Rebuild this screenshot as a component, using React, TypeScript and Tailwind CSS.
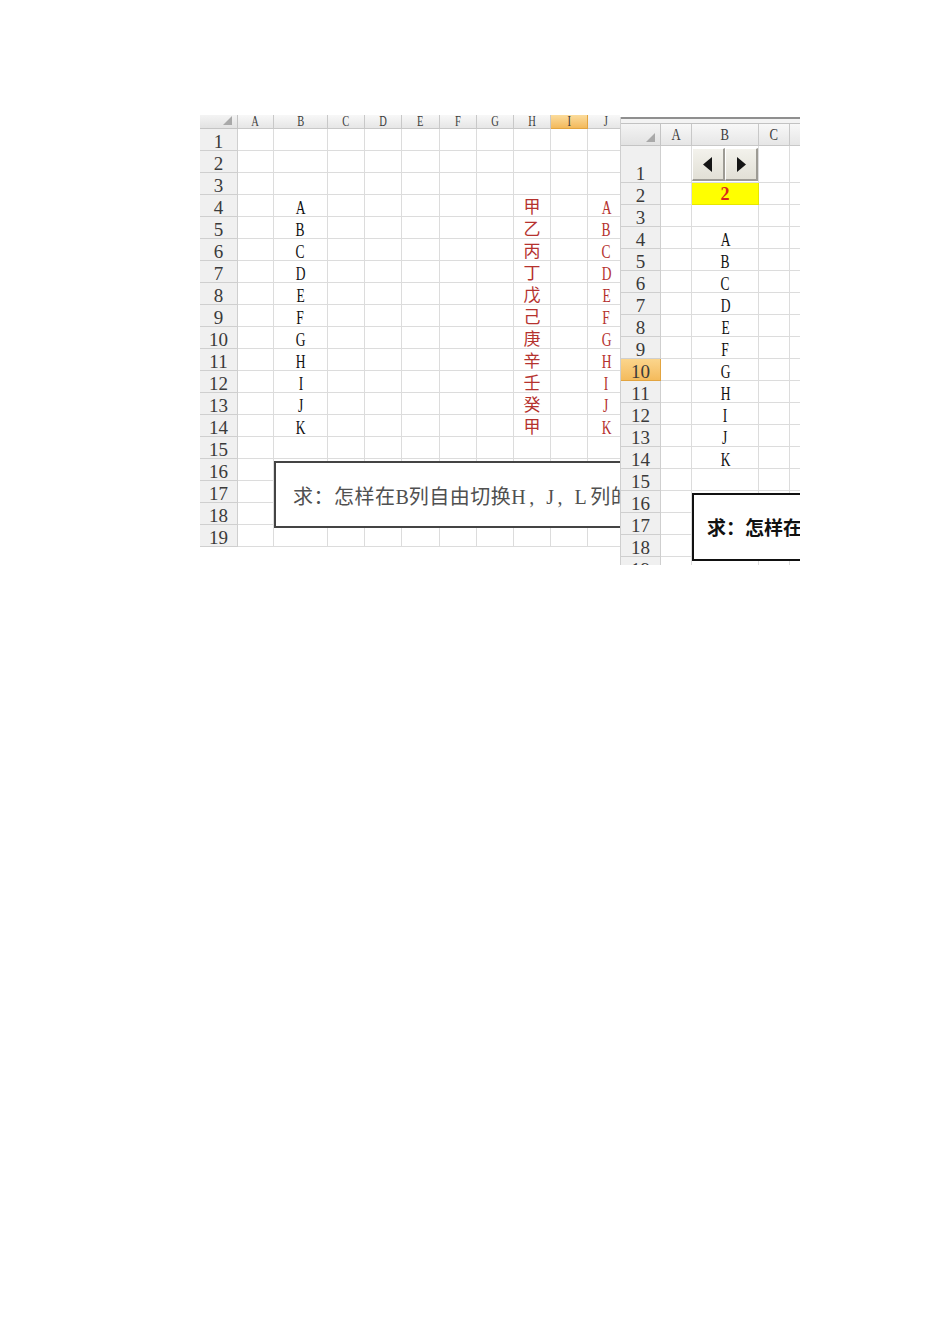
import { Fragment, type ReactNode } from "react";

const LETTERS = "ABCDEFGHIJK".split("");
const STEMS = "甲乙丙丁戊己庚辛壬癸甲".split("");
const LEFT_COLS = ["A", "B", "C", "D", "E", "F", "G", "H", "I", "J"];
const RIGHT_COLS = ["A", "B", "C", "D"];

const serif = "font-['Liberation_Serif','Times_New_Roman',serif]";
const cjk = "font-['Noto_Sans_CJK_SC','Noto_Sans',sans-serif]";

// narrow serif glyphs, close to SimSun's half-width latin
const Narrow = ({ children, className = "" }: { children: ReactNode; className?: string }) => (
  <span className={`inline-block scale-x-[0.75] ${serif} ${className}`}>{children}</span>
);

const Corner = () => (
  <div className="relative border-r border-b border-[#c4c4c4] bg-linear-to-b from-[#f4f4f4] to-[#e2e2e2]">
    <svg className="absolute right-[5px] bottom-[3px]" width="9" height="9" viewBox="0 0 9 9">
      <polygon points="9,0 9,9 0,9" fill="#a9a9a9" />
    </svg>
  </div>
);

const ColHead = ({ label, active, size }: { label: string; active?: boolean; size: string }) => (
  <div
    className={`flex items-center justify-center overflow-hidden border-r border-b leading-none text-[#3c3c3c] ${size} ${
      active
        ? "border-[#e2a440] bg-linear-to-b from-[#fbdc9c] to-[#f3b95a]"
        : "border-[#c8c8c8] bg-linear-to-b from-[#f8f8f8] to-[#e6e6e6]"
    }`}
  >
    <Narrow>{label}</Narrow>
  </div>
);

const RowHead = ({ n, active }: { n: number; active?: boolean }) => (
  <div
    className={`flex items-end justify-center border-r border-b text-[19px] leading-[16px] text-[#3a3a3a] ${serif} ${
      active
        ? "border-[#e2a440] bg-linear-to-b from-[#fbd58c] to-[#f4bb5c]"
        : "border-[#cfcfcf] bg-[#f0f0f0]"
    }`}
  >
    <span>{n}</span>
  </div>
);

const Cell = ({ children }: { children?: ReactNode }) => (
  <div className="flex items-end justify-center overflow-hidden border-r border-b border-[#dcdcdc] leading-[16px]">
    {children}
  </div>
);

function leftContent(col: string, row: number) {
  if (row < 4 || row > 14) return null;
  const i = row - 4;
  if (col === "B") return <Narrow className="text-[18px] text-[#111]">{LETTERS[i]}</Narrow>;
  if (col === "H")
    return <span className={`text-[17px] leading-[20px] text-[#b5322e] ${cjk}`}>{STEMS[i]}</span>;
  if (col === "J") return <Narrow className="text-[18px] text-[#b5322e]">{LETTERS[i]}</Narrow>;
  return null;
}

function LeftSheet() {
  const rows = Array.from({ length: 19 }, (_, i) => i + 1);
  return (
    <div className="relative h-[432px] w-[420px] shrink-0 overflow-hidden">
      <div className="grid w-max grid-cols-[38px_36px_54px_37px_37px_38px_37px_37px_37px_37px_37px] grid-rows-[14px_repeat(19,22px)]">
        <Corner />
        {LEFT_COLS.map((c) => (
          <ColHead key={c} label={c} active={c === "I"} size="text-[14px]" />
        ))}
        {rows.map((r) => (
          <Fragment key={r}>
            <RowHead n={r} />
            {LEFT_COLS.map((c) => (
              <Cell key={c}>{leftContent(c, r)}</Cell>
            ))}
          </Fragment>
        ))}
      </div>
      <div
        className={`absolute top-[346px] left-[74px] flex h-[67px] w-[420px] items-center border-2 border-[#444] bg-white pt-[4px] pl-[17px] text-[20px] tracking-[0.5px] text-[#505050] ${cjk}`}
      >
        <span className="whitespace-nowrap">
          求：怎样在<span className={`tracking-normal ${serif}`}>B</span>列自由切换
          <span className={`tracking-[3.5px] ${serif}`}>H, J, L</span>列的内容
        </span>
      </div>
    </div>
  );
}

const Spinner = () => (
  <div className="flex h-[33px] w-full self-center">
    {[false, true].map((right) => (
      <div
        key={String(right)}
        className="flex flex-1 items-center justify-center border-t border-l border-r-2 border-b-2 border-t-white border-l-white border-r-[#9d9b94] border-b-[#9d9b94] bg-linear-to-b from-[#f3f2ec] to-[#e2e0d6]"
      >
        <svg width="10" height="15" viewBox="0 0 10 15">
          <polygon points={right ? "1,0 10,7.5 1,15" : "9,0 0,7.5 9,15"} fill="#151515" />
        </svg>
      </div>
    ))}
  </div>
);

function rightContent(col: string, row: number) {
  if (col !== "B") return null;
  if (row >= 4 && row <= 14) return <Narrow className="text-[18px] text-[#111]">{LETTERS[row - 4]}</Narrow>;
  return null;
}

function RightSheet() {
  const rows = Array.from({ length: 19 }, (_, i) => i + 1);
  return (
    <div className="relative mt-[2px] h-[448px] w-[180px] shrink-0 overflow-hidden border-l border-[#cfcfcf]">
      <div className="h-[7px] border-t-2 border-b border-t-[#8f8f8f] border-b-[#c2c2c2] bg-[#f3f3f3]" />
      <div className="grid w-max grid-cols-[40px_31px_67px_31px_31px] grid-rows-[22px_37px_repeat(18,22px)]">
        <Corner />
        {RIGHT_COLS.map((c) => (
          <ColHead key={c} label={c} size="text-[17px]" />
        ))}
        {rows.map((r) => (
          <Fragment key={r}>
            <RowHead n={r} active={r === 10} />
            {RIGHT_COLS.map((c) =>
              c === "B" && r === 1 ? (
                <div key={c} className="flex border-r border-b border-[#dcdcdc] pt-[2px] pb-[1px]">
                  <Spinner />
                </div>
              ) : c === "B" && r === 2 ? (
                <div
                  key={c}
                  className={`flex items-center justify-center border-r border-b border-[#e6e600] bg-[#ffff00] text-[18px] leading-none font-bold text-[#d8281c] ${serif}`}
                >
                  <span>2</span>
                </div>
              ) : (
                <Cell key={c}>{rightContent(c, r)}</Cell>
              )
            )}
          </Fragment>
        ))}
      </div>
      <div
        className={`absolute top-[376px] left-[71px] flex h-[68px] w-[200px] items-center border-2 border-[#111] bg-white pl-[13px] text-[19px] font-bold text-[#111] ${cjk}`}
      >
        <span className="whitespace-nowrap">求：怎样在B列自由切换</span>
      </div>
    </div>
  );
}

export default function App() {
  return (
    <div className="min-h-[1344px] w-full bg-white">
      <div className="flex items-start pt-[115px] pl-[200px]">
        <LeftSheet />
        <RightSheet />
      </div>
    </div>
  );
}
